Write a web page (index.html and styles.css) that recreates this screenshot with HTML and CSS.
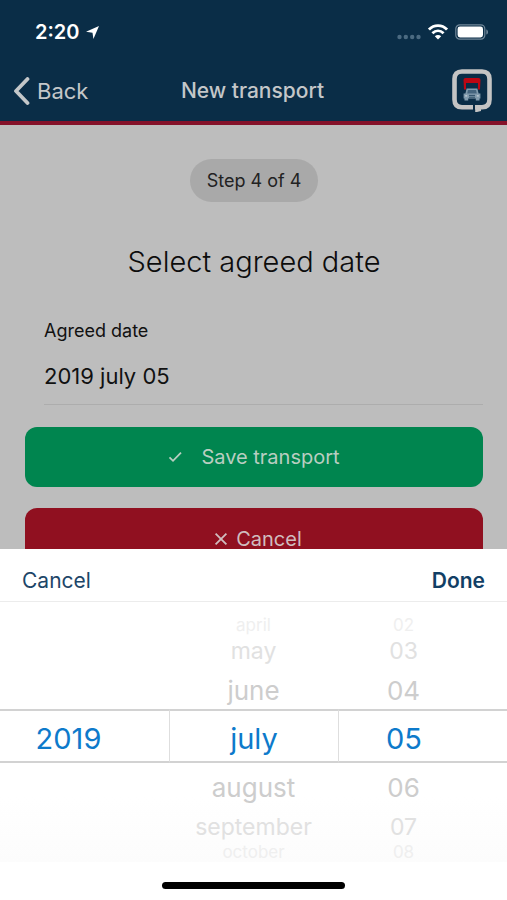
FILE: index.html
```html
<!DOCTYPE html>
<html lang="en">
<head>
<meta charset="utf-8">
<meta name="viewport" content="width=device-width, initial-scale=1">
<title>New transport</title>
<link rel="stylesheet" href="styles.css">
</head>
<body>
<header class="header">
  <div class="status">
    <div class="status-group">
      <span class="time">2:20</span>
      <svg class="location" width="13" height="13" viewBox="0 0 14 14" aria-hidden="true"><path d="M14 0 L8 14 L7 7.2 L0 6.2 Z" fill="#fff"/></svg>
    </div>
    <div class="status-group status-icons">
      <svg width="24" height="6" viewBox="0 0 24 6" aria-hidden="true"><g fill="#4b6a81"><circle cx="2.5" cy="3" r="2.2"/><circle cx="8.8" cy="3" r="2.2"/><circle cx="15.2" cy="3" r="2.2"/><circle cx="21.5" cy="3" r="2.2"/></g></svg>
      <svg width="20" height="16" viewBox="0 0 20 16" aria-hidden="true"><g fill="none" stroke="#fff" stroke-width="2.8"><path d="M1 5.6 C6 .4 14 .4 19 5.6"/><path d="M4.4 9.2 C7.7 6 12.3 6 15.6 9.2"/></g><path d="M10 15.6 L6.8 12.2 C8.6 10.6 11.4 10.6 13.2 12.2 Z" fill="#fff"/></svg>
      <svg width="34" height="16" viewBox="0 0 34 16" aria-hidden="true"><rect x=".8" y=".8" width="29" height="14.4" rx="4" fill="none" stroke="#708799" stroke-width="1.2"/><rect x="2.6" y="2.6" width="25.4" height="10.8" rx="2.4" fill="#fff"/><path d="M31.3 5.4 C33.6 6 33.6 10 31.3 10.6 Z" fill="#708799"/></svg>
    </div>
  </div>
  <nav class="nav">
    <a class="back" href="#">
      <svg width="17" height="28" viewBox="0 0 17 28" aria-hidden="true"><path d="M14.5 2 L3 14 L14.5 26" fill="none" stroke="#c4c7c9" stroke-width="3.8" stroke-linecap="round" stroke-linejoin="round"/></svg>
      Back
    </a>
    <h1 class="title">New transport</h1>
    <svg class="logo" width="40" height="44" viewBox="0 0 40 44" role="img" aria-label="Transport">
      <path d="M22 38.2 H30 Q37.5 38.2 37.5 30.5 V10 Q37.5 2.5 30 2.5 H10 Q2.5 2.5 2.5 10 V30.5 Q2.5 38.2 10 38.2 H21" fill="none" stroke="#c4c4c4" stroke-width="4.6"/>
      <path d="M23.2 36 H29 V42 L25 43 H23.2 Z" fill="#c4c4c4"/>
      <path d="M22.3 35.5 V41" stroke="#0a2d47" stroke-width="1.4"/>
      <path d="M12 20.5 L11.5 11 Q11.5 9 13.5 9 H26.5 Q28.5 9 28.5 11 L28 20.5 H26 V14 H14 V20.5 Z" fill="#bd0713"/>
      <path d="M14.6 19.5 H25.4 L26.6 24.5 H28.4 V29.5 H27.5 V31.5 H23.8 V29.5 H16.2 V31.5 H12.5 V29.5 H11.6 V24.5 H13.4 Z" fill="#819bad"/>
      <path d="M16 21 H24 L24.8 24.5 H15.2 Z" fill="#45657e"/>
      <path d="M17 26.4 H23 M17 28.2 H23" stroke="#24465f" stroke-width=".9"/>
      <path d="M13.2 26.8 H15.2 M24.8 26.8 H26.8" stroke="#c7d2d9" stroke-width="1.2"/>
    </svg>
  </nav>
</header>

<main class="page">
  <p class="step">Step 4 of 4</p>
  <h2 class="heading">Select agreed date</h2>
  <form class="form">
    <div class="field">
      <label for="agreed-date">Agreed date</label>
      <input id="agreed-date" type="text" value="2019 july 05" readonly>
    </div>
    <button class="button save" type="button">
      <svg width="15" height="12" viewBox="0 0 15 12" aria-hidden="true"><path d="M1.5 6.4 L5 9.8 L13 1.6" fill="none" stroke="#b9cec1" stroke-width="1.8"/></svg>
      Save transport
    </button>
    <button class="button discard" type="button">
      <svg width="14" height="14" viewBox="0 0 14 14" aria-hidden="true"><path d="M1.6 1.6 L12.4 12.4 M12.4 1.6 L1.6 12.4" fill="none" stroke="#d0bdbf" stroke-width="1.8"/></svg>
      Cancel
    </button>
  </form>
</main>

<section class="sheet" aria-label="Date picker">
  <div class="toolbar">
    <button type="button">Cancel</button>
    <button class="done" type="button">Done</button>
  </div>
  <div class="picker">
    <ul class="wheel year" role="listbox" aria-label="Year">
      <li class="edge"></li>
      <li class="far"></li>
      <li class="near"></li>
      <li class="selected" role="option" aria-selected="true">2019</li>
    </ul>
    <ul class="wheel" role="listbox" aria-label="Month">
      <li class="edge" role="option">april</li>
      <li class="far" role="option">may</li>
      <li class="near" role="option">june</li>
      <li class="selected" role="option" aria-selected="true">july</li>
      <li class="near" role="option">august</li>
      <li class="far" role="option">september</li>
      <li class="edge" role="option">october</li>
    </ul>
    <ul class="wheel day" role="listbox" aria-label="Day">
      <li class="edge" role="option">02</li>
      <li class="far" role="option">03</li>
      <li class="near" role="option">04</li>
      <li class="selected" role="option" aria-selected="true">05</li>
      <li class="near" role="option">06</li>
      <li class="far" role="option">07</li>
      <li class="edge" role="option">08</li>
    </ul>
  </div>
  <div class="home"></div>
</section>
</body>
</html>
```
FILE: styles.css
```css
* {
  box-sizing: border-box;
}

body {
  margin: 0;
  min-height: 100vh;
  overflow: hidden;
  background: #bdbdbd;
  color: #111;
  font-family: Inter, "Liberation Sans", sans-serif;
}

h1, h2, p, ul {
  margin: 0;
  padding: 0;
}

button, input {
  font-family: inherit;
  border: 0;
  padding: 0;
  background: none;
}

svg {
  flex: none;
}

.header {
  background: #0a2d47;
  border-bottom: 4px solid #85122a;
}

.status {
  display: flex;
  align-items: center;
  justify-content: space-between;
  height: 60px;
  padding: 4px 18px 0 35px;
}

.status-group {
  display: flex;
  align-items: center;
  gap: 6px;
}

.status-icons {
  gap: 7px;
}

.status-icons > :first-child {
  align-self: flex-end;
}

.time {
  color: #fff;
  font-size: 20px;
  font-weight: 600;
}

.nav {
  display: grid;
  grid-template-columns: 1fr auto 1fr;
  align-items: center;
  height: 61px;
  padding: 0 15px 0 13px;
  color: #c4c7c9;
}

.back {
  display: flex;
  align-items: center;
  gap: 7px;
  color: inherit;
  font-size: 22px;
  text-decoration: none;
}

.title {
  font-size: 21px;
  font-weight: 500;
}

.logo {
  justify-self: end;
}

.page {
  display: flex;
  flex-direction: column;
  align-items: center;
  padding: 34px 24px 0 25px;
}

.step {
  padding: 0 17px;
  border-radius: 22px;
  background: #a9a9a9;
  color: #222;
  font-size: 18px;
  line-height: 43px;
}

.heading {
  margin-top: 40px;
  color: #0c0c0c;
  font-size: 29px;
  font-weight: 300;
  line-height: 40px;
}

.form {
  display: flex;
  flex-direction: column;
  align-self: stretch;
}

.field {
  display: flex;
  flex-direction: column;
  margin: 36px 0 22px 19px;
  border-bottom: 1px solid #adadad;
}

.field label {
  font-size: 18px;
  line-height: 26px;
}

.field input {
  width: 100%;
  height: 60px;
  padding-top: 4px;
  color: #111;
  font-size: 22px;
}

.button {
  display: flex;
  align-items: center;
  justify-content: center;
  height: 60px;
  border-radius: 12px;
  font-size: 20px;
}

.save {
  gap: 18px;
  background: #00854f;
  color: #b9cec1;
}

.discard {
  gap: 8px;
  margin-top: 21px;
  padding: 2px 0 0 8px;
  background: #901020;
  color: #d0bdbf;
}

.sheet {
  position: fixed;
  right: 0;
  bottom: 0;
  left: 0;
  background: #fff;
}

.toolbar {
  display: flex;
  align-items: center;
  justify-content: space-between;
  height: 53px;
  padding: 11px 22px 0;
  border-bottom: 1px solid #ececec;
}

.toolbar button {
  color: #1d4668;
  font-size: 21px;
}

.toolbar .done {
  color: #123f65;
  font-weight: 600;
}

.picker {
  display: grid;
  grid-template-columns: repeat(3, 1fr);
  height: 260px;
  background: linear-gradient(#fff 75%, #fcfcfc);
}

.wheel {
  list-style: none;
  padding-top: 13px;
  text-align: center;
}

.year li {
  padding-right: 32px;
}

.day li {
  padding-right: 38px;
}

.wheel + .wheel .selected {
  border-left: 1px solid #dedede;
}

.wheel .selected {
  height: 54px;
  border-top: 2px solid #d2d2d2;
  border-bottom: 2px solid #d2d2d2;
  color: #0d7acb;
  font-size: 29px;
  line-height: 56px;
}

.near {
  height: 44px;
  color: #cdcdcd;
  font-size: 26px;
  line-height: 52px;
}

.far {
  height: 30px;
  color: #e1e1e1;
  font-size: 23px;
  line-height: 32px;
}

.edge {
  height: 20px;
  color: #efefef;
  font-size: 17px;
  line-height: 20px;
}

.selected ~ .near {
  line-height: 50px;
}

.selected ~ .far {
  height: 35px;
  line-height: 40px;
}

.home {
  display: flex;
  justify-content: center;
  height: 38px;
  padding-top: 20px;
}

.home::after {
  content: "";
  width: 36%;
  height: 7px;
  border-radius: 4px;
  background: #000;
}
```
